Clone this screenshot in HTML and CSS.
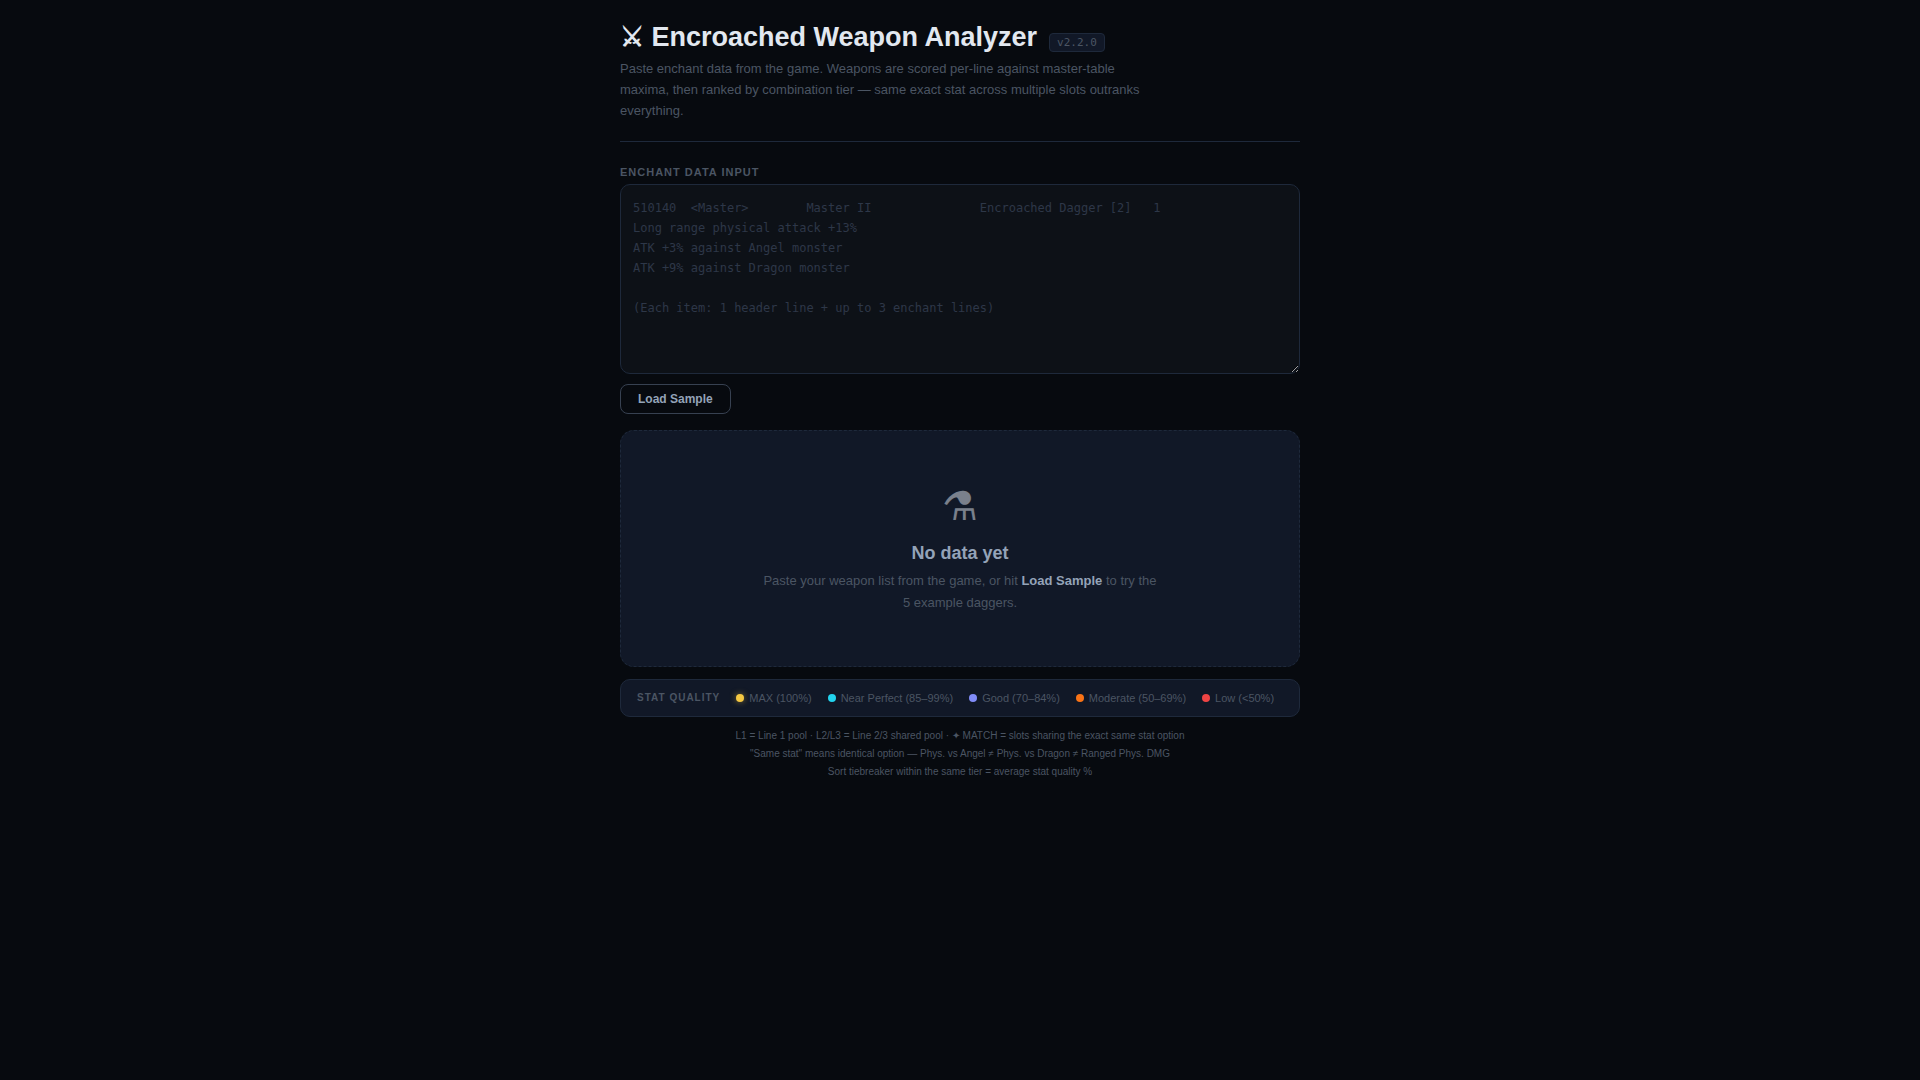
FILE: index.html
```html
<!DOCTYPE html>
<html lang="en">
<head>
    <meta charset="UTF-8">
    <meta name="viewport" content="width=device-width, initial-scale=1.0">
    <title>Encroached Weapon Analyzer</title>
    <link rel="stylesheet" href="styles.css">
</head>
<body>
    <div class="app">
        <header class="header">
            <div class="title-row">
                <h1>⚔ Encroached Weapon Analyzer</h1>
                <span class="version">v2.2.0</span>
            </div>
            <p class="subtitle">Paste enchant data from the game. Weapons are scored per-line against master-table maxima, then ranked by combination tier — same exact stat across multiple slots outranks everything.</p>
        </header>

        <main>
            <label class="input-label" for="enchantInput">Enchant Data Input</label>
            <textarea class="input-box" id="enchantInput" spellcheck="false" placeholder="510140  <Master>        Master II               Encroached Dagger [2]   1
Long range physical attack +13%
ATK +3% against Angel monster
ATK +9% against Dragon monster

(Each item: 1 header line + up to 3 enchant lines)"></textarea>
            <div class="actions">
                <button class="btn" type="button">Load Sample</button>
            </div>

            <section class="empty">
                <div class="empty-icon">⚗</div>
                <h2>No data yet</h2>
                <p>Paste your weapon list from the game, or hit <strong>Load Sample</strong> to try the 5 example daggers.</p>
            </section>

            <!-- stat quality colours -->
            <div class="legend">
                <span class="legend-title">Stat Quality</span>
                <span class="legend-item"><i class="dot max"></i>MAX (100%)</span>
                <span class="legend-item"><i class="dot near"></i>Near Perfect (85–99%)</span>
                <span class="legend-item"><i class="dot good"></i>Good (70–84%)</span>
                <span class="legend-item"><i class="dot moderate"></i>Moderate (50–69%)</span>
                <span class="legend-item"><i class="dot low"></i>Low (&lt;50%)</span>
            </div>
        </main>

        <footer class="notes">
            <p>L1 = Line 1 pool · L2/L3 = Line 2/3 shared pool · ✦ MATCH = slots sharing the exact same stat option</p>
            <p>"Same stat" means identical option — Phys. vs Angel ≠ Phys. vs Dragon ≠ Ranged Phys. DMG</p>
            <p>Sort tiebreaker within the same tier = average stat quality %</p>
        </footer>
    </div>
</body>
</html>
```
FILE: styles.css
```css
* {
    margin: 0;
    padding: 0;
    box-sizing: border-box;
}
body {
    background-color: #070a0f;
    color: #e2e8f0;
    font-family: "Liberation Sans", Arial, sans-serif;
}
.app {
    max-width: 712px;
    margin: 0 auto;
    padding: 20px 16px;
}

.header {
    padding-bottom: 20px;
    margin-bottom: 24px;
    border-bottom: 1px solid #1e293b;
}
.title-row {
    display: flex;
    align-items: flex-end;
    gap: 12px;
    margin-bottom: 4px;
}
h1 {
    font-size: 27px;
    line-height: 34px;
}
.version {
    margin-bottom: 2px;
    padding: 2px 7px;
    border: 1px solid #1e293b;
    border-radius: 4px;
    background-color: #111827;
    color: #4b5563;
    font: 11px/13px "DejaVu Sans Mono", monospace;
}
.subtitle {
    max-width: 520px;
    color: #4b5563;
    font-size: 13px;
    line-height: 21px;
}

.input-label {
    display: block;
    margin-bottom: 5px;
    color: #4b5563;
    font-size: 11px;
    font-weight: bold;
    line-height: 13px;
    letter-spacing: 1px;
    text-transform: uppercase;
}
.input-box {
    display: block;
    width: 100%;
    height: 190px;
    padding: 13px 12px;
    border: 1px solid #1e293b;
    border-radius: 10px;
    outline: none;
    resize: vertical;
    background-color: #0d1117;
    color: #cbd5e1;
    font: 12px/20px "DejaVu Sans Mono", monospace;
}
.input-box::placeholder {
    color: #2d3748;
}
.actions {
    display: flex;
    margin: 10px 0 16px;
}
.btn {
    padding: 7px 17px;
    border: 1px solid #374151;
    border-radius: 8px;
    background: transparent;
    color: #94a3b8;
    font: bold 12px/14px "Liberation Sans", Arial, sans-serif;
    cursor: pointer;
}

.empty {
    padding: 48px 24px 52px;
    border: 1px dashed #1e293b;
    border-radius: 14px;
    background-color: #111827;
    text-align: center;
}
.empty-icon {
    margin-bottom: 10px;
    font-size: 40px;
    line-height: 54px;
    opacity: 0.5;
}
.empty h2 {
    margin-bottom: 6px;
    color: #94a3b8;
    font-size: 18px;
    line-height: 21px;
}
.empty p {
    max-width: 400px;
    margin: 0 auto;
    color: #4b5563;
    font-size: 13px;
    line-height: 22px;
}
.empty strong {
    color: #94a3b8;
}

.legend {
    display: flex;
    flex-wrap: wrap;
    align-items: center;
    gap: 8px 16px;
    margin-top: 12px;
    padding: 12px 16px;
    border: 1px solid #1e293b;
    border-radius: 10px;
    background-color: #111827;
    color: #4b5563;
    font-size: 11px;
    line-height: 12px;
}
.legend-title {
    font-size: 10px;
    font-weight: bold;
    letter-spacing: 1px;
    text-transform: uppercase;
}
.legend-item {
    display: flex;
    align-items: center;
    gap: 5px;
}
.dot {
    width: 8px;
    height: 8px;
    border-radius: 50%;
}
.max {
    background-color: #f5c842;
    box-shadow: 0 0 6px rgba(245, 200, 66, 0.5);
}
.near {
    background-color: #22d3ee;
}
.good {
    background-color: #818cf8;
}
.moderate {
    background-color: #f97316;
}
.low {
    background-color: #ef4444;
}

.notes {
    margin-top: 10px;
    color: #4b5563;
    font-size: 10px;
    line-height: 18px;
    text-align: center;
}
```
